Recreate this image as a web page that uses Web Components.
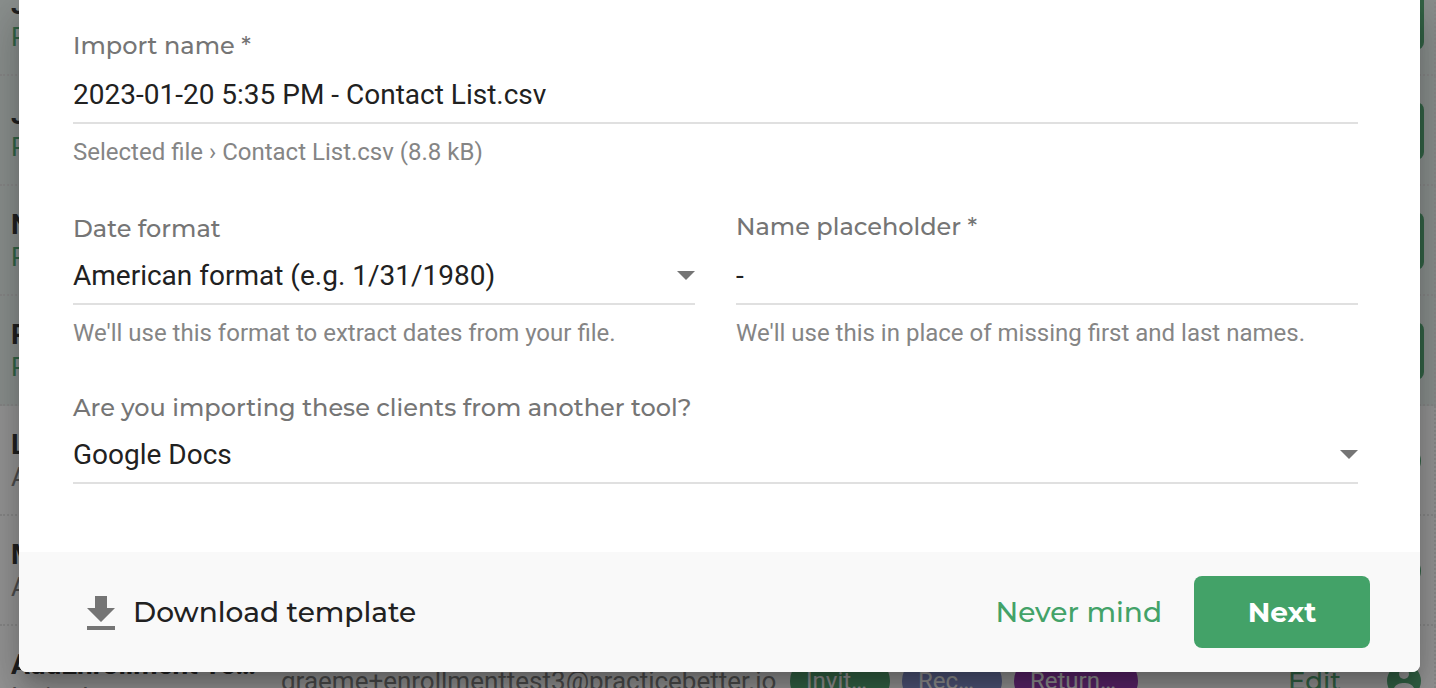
<!DOCTYPE html>
<html lang="en">
<head>
<meta charset="utf-8">
<title>Import clients</title>
<style>
  body { margin: 0; font-family: Roboto, "Liberation Sans", sans-serif; color: #212121; --brand: #43a268; --heading: Montserrat, Inter, "DejaVu Sans", sans-serif; }
</style>
</head>
<body>
<import-page></import-page>

<template id="page-tpl">
  <style>
    :host { display: block; position: relative; height: 100vh; overflow: hidden; background: #fff; }
    .list { margin-top: -34px; }
    .scrim { position: absolute; inset: 0; background: rgba(33, 33, 33, .48); }
    .layer { position: absolute; inset: 0; padding: 0 16px 16px 19px; display: flex; flex-direction: column; }
    import-dialog { flex: 1; }
  </style>
  <div class="list">
    <client-row active><span slot="name">J</span><span slot="status">P</span></client-row>
    <client-row active><span slot="name">J</span><span slot="status">P</span></client-row>
    <client-row active><span slot="name">N</span><span slot="status">P</span></client-row>
    <client-row active><span slot="name">P</span><span slot="status">P</span></client-row>
    <client-row><span slot="name">L</span><span slot="status">A</span></client-row>
    <client-row><span slot="name">M</span><span slot="status">A</span></client-row>
    <client-row>
      <span slot="name">AddEnrollment Te…</span><span slot="status">Invited</span>
      <span slot="email">graeme+enrollmenttest3@practicebetter.io</span>
      <tag-chip slot="tags" style="--chip:#43a268">Invit…</tag-chip>
      <tag-chip slot="tags" style="--chip:#7986cb">Rec…</tag-chip>
      <tag-chip slot="tags" style="--chip:#9227b0">Return…</tag-chip>
      <a slot="edit" href="#">Edit</a>
    </client-row>
  </div>
  <div class="scrim"></div>
  <div class="layer"><import-dialog></import-dialog></div>
</template>

<template id="row-tpl">
  <style>
    :host { display: grid; grid-template-columns: 270px 508px 1fr auto auto; align-items: center; height: 110px; box-sizing: border-box; padding: 1px 12px 0 11px; border-bottom: 2px dotted #e4e4e4; border-right: 2px dotted #eaeaea; background: #fff; }
    :host([active]) { background: #ecf5f2; }
    .name { font-size: 28px; line-height: 32px; font-weight: 700; white-space: nowrap; }
    .status { font-size: 26px; line-height: 32px; color: #757575; }
    :host([active]) .status { color: var(--brand); }
    .email { font-size: 26px; line-height: 32px; color: #757575; }
    .tags { display: flex; gap: 12px; margin-left: 1px; }
    .edit { font: 500 26px/32px var(--heading); margin-right: 46px; }
    ::slotted(a) { color: var(--brand); text-decoration: none; }
    svg { display: block; width: 34px; height: 34px; margin-right: 1px; }
    .book { display: none; width: 176px; height: 58px; border: 0; border-radius: 8px; background: var(--brand); }
    :host([active]) .book { display: block; margin-right: -2px; }
    :host([active]) svg { display: none; }
  </style>
  <div><div class="name"><slot name="name"></slot></div><div class="status"><slot name="status"></slot></div></div>
  <div class="email"><slot name="email"></slot></div>
  <div class="tags"><slot name="tags"></slot></div>
  <div class="edit"><slot name="edit"></slot></div>
  <div><button class="book" aria-label="Confirm" tabindex="-1"></button>
  <svg viewBox="0 0 34 34" aria-hidden="true"><circle cx="17" cy="17" r="17" fill="#43a268"/><circle cx="17" cy="10" r="5" fill="#fff"/><path d="M7 24c2-4 6-5 10-5s8 1 10 5c-2 3-6 5-10 5s-8-2-10-5z" fill="#fff"/></svg></div>
</template>

<template id="chip-tpl">
  <style>
    :host { display: block; box-sizing: border-box; min-width: 100px; padding: 8px 22px 8px 16px; border-radius: 24px; background: var(--chip); color: #fff; font-size: 24px; line-height: 32px; white-space: nowrap; }
  </style>
  <slot></slot>
</template>

<template id="dialog-tpl">
  <style>
    :host { display: flex; flex-direction: column; border-radius: 0 0 8px 8px; background: #fff; box-shadow: 0 14px 16px -8px rgba(0,0,0,.2), 0 26px 38px 4px rgba(0,0,0,.14), 0 10px 48px 8px rgba(0,0,0,.12); }
    form { flex: 1; display: grid; grid-template-columns: 1fr 1fr; column-gap: 41px; row-gap: 43px; align-items: end; align-content: end; padding: 0 62px 68px 54px; }
    .wide { grid-column: 1 / -1; }
    footer { display: flex; align-items: center; box-sizing: border-box; height: 120px; padding: 0 50px 0 54px; background: #f9f9f9; border-radius: 0 0 8px 8px; }
    button { display: flex; align-items: center; height: 72px; border: 0; padding: 0; background: none; font: 500 28px/36px var(--heading); color: #212121; }
    .download { gap: 4px; }
    .download svg { width: 56px; height: 56px; }
    .never { margin-left: auto; margin-right: 32px; color: var(--brand); }
    .next { width: 176px; justify-content: center; border-radius: 8px; background: var(--brand); color: #fff; font-weight: 700; }
  </style>
  <form>
    <form-field class="wide" kind="input" label="Import name *" value="2023-01-20 5:35 PM - Contact List.csv" hint="Selected file › Contact List.csv (8.8 kB)"></form-field>
    <form-field kind="select" label="Date format" value="American format (e.g. 1/31/1980)" hint="We'll use this format to extract dates from your file."></form-field>
    <form-field kind="input" label="Name placeholder *" value="-" hint="We'll use this in place of missing first and last names."></form-field>
    <form-field class="wide" kind="select" label="Are you importing these clients from another tool?" value="Google Docs"></form-field>
  </form>
  <footer>
    <button class="download" type="button">
      <svg viewBox="0 0 56 56" aria-hidden="true" fill="#757575"><path d="M22 12h12v12h8L28 38 14 24h8zM14 42h28v4H14z"/></svg>
      Download template</button>
    <button class="never" type="button">Never mind</button>
    <button class="next" type="button">Next</button>
  </footer>
</template>

<template id="field-tpl">
  <style>
    :host { display: block; min-width: 0; }
    label { display: block; font: 500 24px/32px var(--heading); color: #757575; }
    .control { position: relative; margin-top: 4px; padding-top: 10px; border-bottom: 2px solid #e0e0e0; }
    :host([kind="select"]) .control { margin-top: 2px; }
    input, select { display: block; appearance: none; box-sizing: border-box; width: 100%; height: 46px; margin: 0; padding: 0 0 10px; border: 0; border-radius: 0; outline: 0; background: none; font: 400 28px/36px Roboto, sans-serif; color: #212121; }
    select { padding-bottom: 8px; }
    .arrow { position: absolute; right: 0; top: 24px; border: 9px solid transparent; border-top-color: #757575; border-bottom: 0; pointer-events: none; }
    .hint { margin: 12px 0 0; font-size: 24px; line-height: 32px; color: #858585; }
  </style>
  <label for="c"></label>
  <div class="control"></div>
</template>

<script>
  const stamp = (host, id) => {
    const root = host.attachShadow({ mode: 'open' });
    root.append(document.getElementById(id).content.cloneNode(true));
    return root;
  };
  customElements.define('form-field', class extends HTMLElement {
    connectedCallback() {
      if (this.shadowRoot) return;
      const root = stamp(this, 'field-tpl');
      root.querySelector('label').textContent = this.getAttribute('label');
      const box = root.querySelector('.control');
      const control = document.createElement(this.getAttribute('kind'));
      control.id = 'c';
      if (control.localName === 'select') {
        control.add(new Option(this.getAttribute('value')));
        const arrow = document.createElement('span');
        arrow.className = 'arrow';
        box.append(control, arrow);
      } else {
        control.value = this.getAttribute('value');
        box.append(control);
      }
      if (this.hasAttribute('hint')) {
        const hint = document.createElement('p');
        hint.className = 'hint';
        hint.textContent = this.getAttribute('hint');
        root.append(hint);
      }
    }
  });
  for (const [name, id] of [['tag-chip', 'chip-tpl'], ['client-row', 'row-tpl'], ['import-dialog', 'dialog-tpl'], ['import-page', 'page-tpl']]) {
    customElements.define(name, class extends HTMLElement {
      connectedCallback() { if (!this.shadowRoot) stamp(this, id); }
    });
  }
</script>
</body>
</html>
